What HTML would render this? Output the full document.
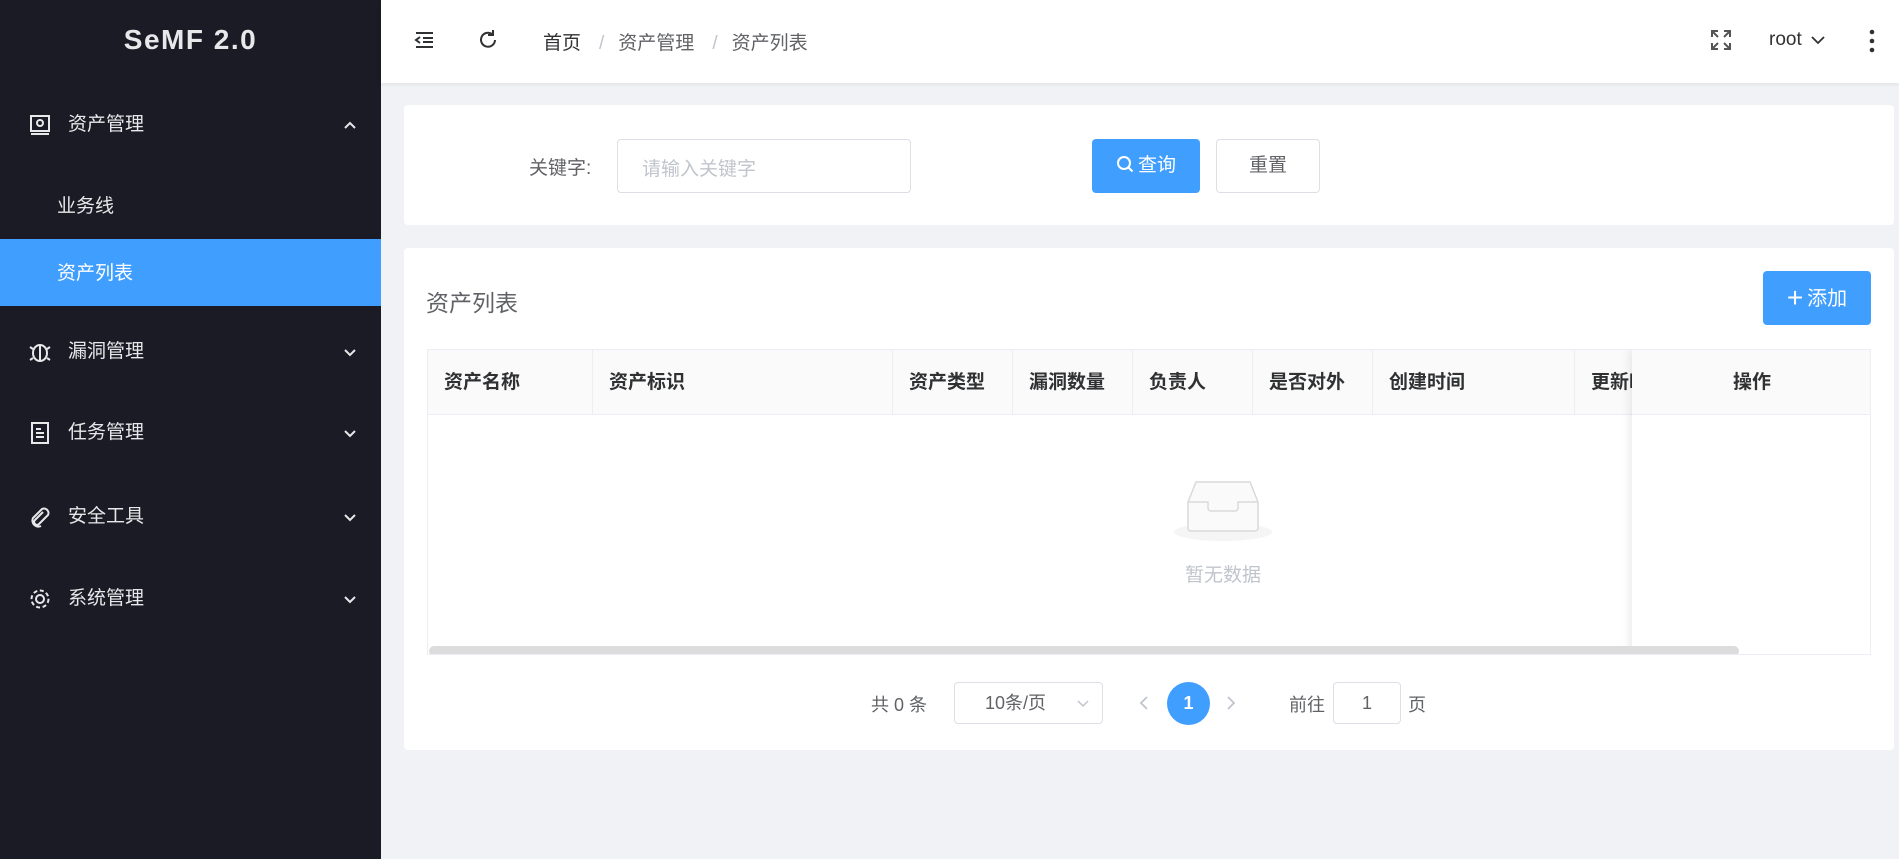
<!DOCTYPE html>
<html><head><meta charset="utf-8"><style>
*{margin:0;padding:0;box-sizing:border-box}
body{width:1899px;height:859px;overflow:hidden;background:#f0f2f5;font-family:"Liberation Sans","Noto Sans CJK SC",sans-serif;position:relative;color:#606266}
.abs{position:absolute}
.side{left:0;top:0;width:381px;height:859px;background:#1a1b25;color:#e8e8ea}
.logo{position:absolute;left:0;width:381px;top:24px;text-align:center;font-size:28px;font-weight:bold;letter-spacing:1.5px;color:#e8e8ea;font-family:"Liberation Sans",sans-serif}
.mi{position:absolute;left:0;width:381px;height:60px;line-height:60px;font-size:19px}
.mi .ic{position:absolute;left:29px;top:19px;width:22px;height:22px}
.mi .t{position:absolute;left:68px}
.mi .ar{position:absolute;left:342px;top:24px}
.sub{position:absolute;left:0;width:381px;height:67px;line-height:70px;font-size:19px;padding-left:57px}
.hdr{left:381px;top:0;width:1518px;height:83px;background:#fff;box-shadow:0 1px 4px rgba(0,21,41,.08)}
.card{background:#fff;border-radius:4px}
.th{position:absolute;top:0;height:65px;line-height:65px;font-size:19px;font-weight:bold;color:#303133;border-right:1px solid #ebeef5;padding-left:16px}
</style></head><body>
<div class="abs side">
 <div class="logo">SeMF 2.0</div>
 <div class="mi" style="top:95px"><svg class="ic" viewBox="0 0 22 22" fill="none" stroke="#e8e8ea" stroke-width="2"><rect x="2" y="2" width="18" height="15"/><circle cx="11" cy="9" r="3"/><path d="M2 20h18"/></svg><span class="t">资产管理</span><svg class="ar" width="16" height="12" viewBox="0 0 16 12" fill="none" stroke="#e8e8ea" stroke-width="2"><path d="M3 9l5-5 5 5"/></svg></div>
 <div class="sub" style="top:172px">业务线</div>
 <div class="sub" style="top:239px;background:#409eff;color:#fff">资产列表</div>
 <div class="mi" style="top:322px"><svg class="ic" viewBox="0 0 22 22" fill="none" stroke="#e8e8ea" stroke-width="2"><ellipse cx="11" cy="12" rx="7" ry="8"/><path d="M11 4v16M4 8l-3-2M18 8l3-2M4 17l-3 2M18 17l3 2"/></svg><span class="t">漏洞管理</span><svg class="ar" width="16" height="12" viewBox="0 0 16 12" fill="none" stroke="#e8e8ea" stroke-width="2"><path d="M3 4l5 5 5-5"/></svg></div>
 <div class="mi" style="top:403px"><svg class="ic" viewBox="0 0 22 22" fill="none" stroke="#e8e8ea" stroke-width="2"><rect x="3" y="1" width="16" height="20"/><path d="M7 7h5M7 11h8M7 15h8"/></svg><span class="t">任务管理</span><svg class="ar" width="16" height="12" viewBox="0 0 16 12" fill="none" stroke="#e8e8ea" stroke-width="2"><path d="M3 4l5 5 5-5"/></svg></div>
 <div class="mi" style="top:487px"><svg class="ic" viewBox="0 0 22 22" fill="none" stroke="#e8e8ea" stroke-width="2"><path d="M14 6l-8 8a2.5 2.5 0 0 0 4 4l9-9a4.5 4.5 0 0 0-6-6l-9 9a6 6 0 0 0 8 8"/></svg><span class="t">安全工具</span><svg class="ar" width="16" height="12" viewBox="0 0 16 12" fill="none" stroke="#e8e8ea" stroke-width="2"><path d="M3 4l5 5 5-5"/></svg></div>
 <div class="mi" style="top:569px"><svg class="ic" viewBox="0 0 22 22" fill="none" stroke="#e8e8ea" stroke-width="2"><circle cx="11" cy="11" r="4"/><circle cx="11" cy="11" r="8.5" stroke-dasharray="4 2.6"/></svg><span class="t">系统管理</span><svg class="ar" width="16" height="12" viewBox="0 0 16 12" fill="none" stroke="#e8e8ea" stroke-width="2"><path d="M3 4l5 5 5-5"/></svg></div>
</div>
<div class="abs hdr">
 <svg class="abs" style="left:33px;top:31px" width="20" height="18" viewBox="0 0 20 18" fill="none" stroke="#303133" stroke-width="2"><path d="M2 2h17M9 7h10M9 11h10M2 16h17M6 6l-4 3 4 3"/></svg>
 <svg class="abs" style="left:96px;top:29px" width="22" height="22" viewBox="0 0 22 22" fill="none" stroke="#303133" stroke-width="2"><path d="M18 11a7 7 0 1 1-3-6"/><path d="M16 1v5h-5"/></svg>
 <div class="abs" style="left:162px;top:28px;font-size:19px;color:#303133">首页<span style="color:#c0c4cc;margin:0 14px 0 18px">/</span><span style="color:#606266">资产管理</span><span style="color:#c0c4cc;margin:0 14px 0 18px">/</span><span style="color:#606266">资产列表</span></div>
 <svg class="abs" style="left:1329px;top:29px" width="22" height="22" viewBox="0 0 22 22" fill="none" stroke="#555" stroke-width="2"><path d="M2 8V2h6M2 2l6 6M20 8V2h-6M20 2l-6 6M2 14v6h6M2 20l6-6M20 14v6h-6M20 20l-6-6"/></svg>
 <div class="abs" style="left:1388px;top:29px;font-size:19px;color:#303133">root</div>
 <svg class="abs" style="left:1429px;top:35px" width="16" height="10" viewBox="0 0 16 10" fill="none" stroke="#303133" stroke-width="1.8"><path d="M2 2l6 6 6-6"/></svg>
 <svg class="abs" style="left:1487px;top:28px" width="8" height="26" viewBox="0 0 8 26" fill="#303133"><circle cx="4" cy="4" r="2.3"/><circle cx="4" cy="13" r="2.3"/><circle cx="4" cy="22" r="2.3"/></svg>
</div>
<div class="abs card" style="left:404px;top:105px;width:1490px;height:120px">
 <div class="abs" style="left:125px;top:48px;font-size:19px;color:#606266">关键字:</div>
 <div class="abs" style="left:213px;top:34px;width:294px;height:54px;border:1px solid #dcdfe6;border-radius:4px;font-size:19px;color:#c0c4cc;padding:14px 24px">请输入关键字</div>
 <div class="abs" style="left:688px;top:34px;width:108px;height:54px;background:#409eff;border-radius:4px;color:#fff;font-size:19px;line-height:54px;text-align:center"><svg width="18" height="18" viewBox="0 0 18 18" fill="none" stroke="#fff" stroke-width="2" style="vertical-align:-2px;margin-right:4px"><circle cx="8" cy="8" r="6"/><path d="M12.5 12.5l4 4"/></svg>查询</div>
 <div class="abs" style="left:812px;top:34px;width:104px;height:54px;border:1px solid #dcdfe6;border-radius:4px;color:#606266;font-size:19px;line-height:52px;text-align:center">重置</div>
</div>
<div class="abs card" style="left:404px;top:248px;width:1490px;height:502px">
 <div class="abs" style="left:22px;top:36px;font-size:23px;color:#606266">资产列表</div>
 <div class="abs" style="left:1359px;top:23px;width:108px;height:54px;background:#409eff;border-radius:4px;color:#fff;font-size:20px;line-height:54px;text-align:center"><span style="font-size:28px;vertical-align:-2px;margin-right:4px;font-weight:300">+</span>添加</div>
 <div class="abs" style="left:23px;top:101px;width:1444px;height:306px;border:1px solid #ebeef5;overflow:hidden">
  <div class="abs" style="left:0;top:0;width:1444px;height:65px;background:#fafafa;border-bottom:1px solid #ebeef5"></div>
  <div class="th" style="left:0;width:165px">资产名称</div>
  <div class="th" style="left:165px;width:300px">资产标识</div>
  <div class="th" style="left:465px;width:120px">资产类型</div>
  <div class="th" style="left:585px;width:120px">漏洞数量</div>
  <div class="th" style="left:705px;width:120px">负责人</div>
  <div class="th" style="left:825px;width:120px">是否对外</div>
  <div class="th" style="left:945px;width:202px">创建时间</div>
  <div class="th" style="left:1147px;width:120px">更新时间</div>
  <div class="abs" style="left:1204px;top:0;width:240px;height:306px;background:#fff;box-shadow:-3px 0 8px rgba(0,0,0,.08)">
   <div style="height:65px;line-height:65px;background:#fafafa;border-bottom:1px solid #ebeef5;text-align:center;font-size:19px;font-weight:bold;color:#303133">操作</div>
  </div>
  <div class="abs" style="left:1px;top:296px;width:1310px;height:10px;background:#dcdcdc;border-radius:5px"></div>
  <svg class="abs" style="left:746px;top:130px" width="98" height="62" viewBox="0 0 98 62"><ellipse cx="49" cy="52" rx="49" ry="9" fill="#f5f5f5"/><path d="M14 22l8-20h54l8 20v26a3 3 0 0 1-3 3H17a3 3 0 0 1-3-3z" fill="#fafafa" stroke="#d9d9d9" stroke-width="1.5"/><path d="M14 22h20v6a3 3 0 0 0 3 3h24a3 3 0 0 0 3-3v-6h20" fill="none" stroke="#d9d9d9" stroke-width="1.5"/></svg>
  <div class="abs" style="left:700px;top:210px;width:190px;text-align:center;font-size:19px;color:#c0c4cc">暂无数据</div>
 </div>
 <div class="abs" style="left:467px;top:443px;font-size:18px;color:#606266">共 0 条</div>
 <div class="abs" style="left:550px;top:434px;width:149px;height:42px;border:1px solid #dcdfe6;border-radius:4px;font-size:18px;color:#606266;line-height:40px;padding-left:30px">10条/页<svg style="position:absolute;right:12px;top:16px" width="14" height="9" viewBox="0 0 14 9" fill="none" stroke="#c0c4cc" stroke-width="1.5"><path d="M2 2l5 5 5-5"/></svg></div>
 <svg class="abs" style="left:735px;top:447px" width="10" height="16" viewBox="0 0 10 16" fill="none" stroke="#c0c4cc" stroke-width="1.8"><path d="M8 2L2 8l6 6"/></svg>
 <div class="abs" style="left:763px;top:434px;width:43px;height:43px;border-radius:50%;background:#409eff;color:#fff;font-size:18px;font-weight:bold;text-align:center;line-height:43px">1</div>
 <svg class="abs" style="left:822px;top:447px" width="10" height="16" viewBox="0 0 10 16" fill="none" stroke="#c0c4cc" stroke-width="1.8"><path d="M2 2l6 6-6 6"/></svg>
 <div class="abs" style="left:885px;top:443px;font-size:18px;color:#606266">前往</div>
 <div class="abs" style="left:929px;top:434px;width:68px;height:42px;border:1px solid #dcdfe6;border-radius:4px;font-size:18px;color:#606266;line-height:40px;text-align:center">1</div>
 <div class="abs" style="left:1004px;top:443px;font-size:18px;color:#606266">页</div>
</div>
</body></html>
